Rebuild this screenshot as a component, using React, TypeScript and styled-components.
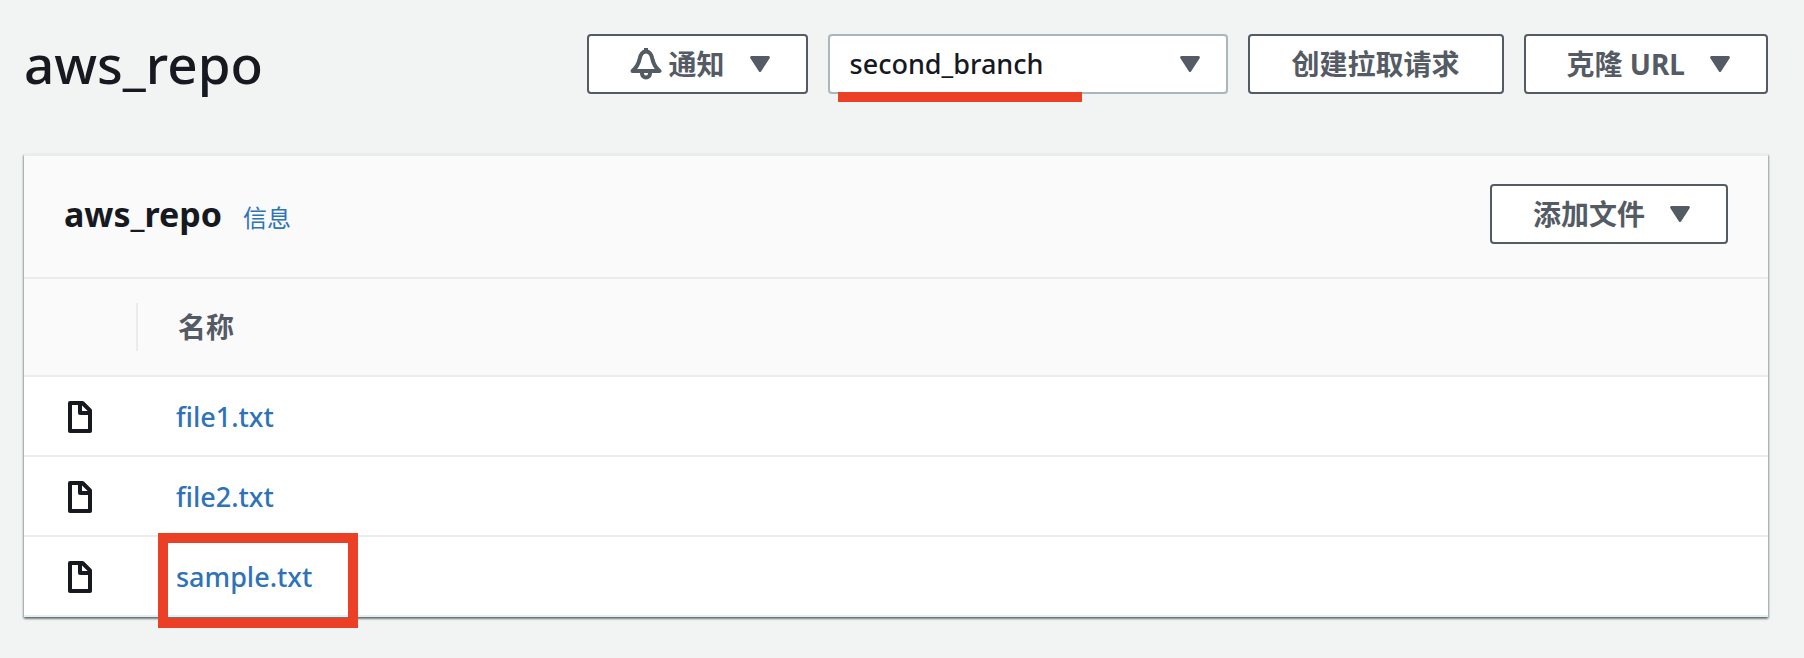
import React from "react";
import styled, { createGlobalStyle } from "styled-components";

const color = {
  page: "#f2f3f3",
  panel: "#fafafa",
  line: "#eaeded",
  text: "#16191f",
  muted: "#545b64",
  input: "#aab7b8",
  link: "#2e73b8",
  mark: "#eb4026",
};

const GlobalStyle = createGlobalStyle`
  * { box-sizing: border-box; }
  body {
    margin: 0;
    background: ${color.page};
    color: ${color.text};
    font-family: "Noto Sans", "Noto Sans CJK SC", sans-serif;
    font-size: 27px;
    font-weight: 500;
    line-height: 40px;
  }
`;

const Page = styled.main`
  padding: 34px 36px 40px 24px;
`;

const PageHeader = styled.header`
  display: flex;
  align-items: center;
  justify-content: space-between;
  gap: 20px;
  margin-bottom: 60px;
`;

const PageTitle = styled.h1`
  margin: 0;
  font-size: 53px;
  line-height: 60px;
  font-weight: 500;
`;

const Actions = styled.div`
  display: flex;
  gap: 20px;
`;

const Button = styled.button<{ $menu?: boolean }>`
  display: flex;
  align-items: center;
  height: 60px;
  padding: 0 ${(p) => (p.$menu ? "36px 0 41px" : "42px")};
  border: 2px solid ${color.muted};
  border-radius: 4px;
  background: #fff;
  color: ${color.muted};
  font: inherit;
  font-size: 28px;
  font-weight: 700;
  white-space: nowrap;
  cursor: pointer;
`;

const CaretSvg = styled.svg`
  display: block;
  flex: none;
  width: 20px;
  height: 16px;
  fill: ${color.muted};
`;

const MenuCaret = styled(CaretSvg)`
  margin-left: 25px;
`;

const BellSvg = styled.svg`
  flex: none;
  width: 32px;
  height: 32px;
  margin-right: 7px;
  fill: none;
  stroke: ${color.muted};
  stroke-width: 4;
  stroke-linejoin: round;
`;

const BranchField = styled.div`
  position: relative;
  width: 400px;
`;

const BranchSelect = styled.select`
  display: block;
  width: 100%;
  height: 60px;
  padding: 0 60px 0 20px;
  border: 2px solid ${color.input};
  border-radius: 4px;
  appearance: none;
  background: #fff;
  color: ${color.text};
  font: inherit;
`;

const FieldCaret = styled(CaretSvg)`
  position: absolute;
  top: 22px;
  right: 28px;
  pointer-events: none;
`;

const Underline = styled.span`
  position: absolute;
  left: 10px;
  bottom: -8px;
  width: 244px;
  height: 10px;
  background: ${color.mark};
`;

const Card = styled.section`
  border-top: 2px solid ${color.line};
  background: #fff;
  box-shadow: 0 2px 2px rgba(0, 28, 36, 0.4), 1px 1px 2px rgba(0, 28, 36, 0.25),
    -1px 1px 2px rgba(0, 28, 36, 0.25);
`;

const CardHeader = styled.div`
  display: flex;
  align-items: center;
  justify-content: space-between;
  padding: 28px 40px 33px;
  background: ${color.panel};
`;

const Heading = styled.div`
  display: flex;
  align-items: baseline;
  gap: 21px;
  padding-top: 4px;
`;

const CardTitle = styled.h2`
  margin: 0;
  font-size: 34px;
  font-weight: 700;
`;

const Link = styled.a<{ $small?: boolean }>`
  color: ${color.link};
  font-size: ${(p) => (p.$small ? 24 : 27)}px;
  font-weight: ${(p) => (p.$small ? 400 : 500)};
  text-decoration: none;
`;

const FileTable = styled.table`
  width: 100%;
  border-collapse: separate;
  border-spacing: 0;
  text-align: left;
`;

const HeadCell = styled.th`
  height: 100px;
  padding: 0;
  border: 2px solid ${color.line};
  border-width: 2px 0;
  background: ${color.panel};
  color: ${color.muted};
  font-size: 28px;
  font-weight: 700;
`;

const HeadLabel = styled.div<{ $divided?: boolean }>`
  height: 48px;
  padding-left: 40px;
  line-height: 48px;
  ${(p) => p.$divided && `border-right: 2px solid ${color.line};`}
`;

const IconCell = styled.td`
  width: 114px;
  height: 80px;
  padding: 2px 0 0 44px;
  border-bottom: 2px solid ${color.line};
`;

const NameCell = styled.td`
  height: 80px;
  padding: 2px 0 0 38px;
  border-bottom: 2px solid ${color.line};
`;

const FileSvg = styled.svg`
  display: block;
  width: 24px;
  height: 32px;
  fill: none;
  stroke: ${color.text};
  stroke-width: 4;
  stroke-linejoin: round;
`;

const Framed = styled.span`
  position: relative;
`;

const Frame = styled.span`
  position: absolute;
  top: -25px;
  left: -18px;
  width: 200px;
  height: 95px;
  border: 10px solid ${color.mark};
  pointer-events: none;
`;

const caretPath = (
  <path d="M1.6 0h16.8a1.4 1.4 0 0 1 1.2 2.2l-8.4 13.1a1.5 1.5 0 0 1-2.4 0L.4 2.2A1.4 1.4 0 0 1 1.6 0z" />
);

const Caret = () => (
  <MenuCaret viewBox="0 0 20 16" aria-hidden="true">
    {caretPath}
  </MenuCaret>
);

const Bell = () => (
  <BellSvg viewBox="0 0 32 32" aria-hidden="true">
    <path d="M16 0v4" />
    <path d="M2.500 23C7 19 8.500 16 9.500 11.500C10.500 6 12.500 3.500 16 3.500s5.500 2.500 6.500 8c1 4.500 2.500 7.500 7 11.500z" />
    <path d="M12 24v1.500a4 4 0 0 0 8 0V24" />
  </BellSvg>
);

const FileIcon = () => (
  <FileSvg viewBox="0 0 24 32" aria-hidden="true">
    <path d="M2 2H14.500L22 9.500V30H2z" />
    <path d="M12 2V12H22" />
  </FileSvg>
);

const files = [
  { name: "file1.txt" },
  { name: "file2.txt" },
  { name: "sample.txt", framed: true },
];

export default function App() {
  return (
    <>
      <GlobalStyle />
      <Page>
        <PageHeader>
          <PageTitle>aws_repo</PageTitle>
          <Actions>
            <Button $menu type="button">
              <Bell />
              通知
              <Caret />
            </Button>
            <BranchField>
              <BranchSelect aria-label="分支" defaultValue="second_branch">
                <option>second_branch</option>
              </BranchSelect>
              <FieldCaret viewBox="0 0 20 16" aria-hidden="true">
                {caretPath}
              </FieldCaret>
              <Underline />
            </BranchField>
            <Button type="button">创建拉取请求</Button>
            <Button $menu type="button">
              克隆 URL
              <Caret />
            </Button>
          </Actions>
        </PageHeader>
        <Card>
          <CardHeader>
            <Heading>
              <CardTitle>aws_repo</CardTitle>
              <Link $small href="#info">
                信息
              </Link>
            </Heading>
            <Button $menu type="button">
              添加文件
              <Caret />
            </Button>
          </CardHeader>
          <FileTable>
            <thead>
              <tr>
                <HeadCell aria-label="类型">
                  <HeadLabel $divided />
                </HeadCell>
                <HeadCell scope="col">
                  <HeadLabel>名称</HeadLabel>
                </HeadCell>
              </tr>
            </thead>
            <tbody>
              {files.map((file) => (
                <tr key={file.name}>
                  <IconCell>
                    <FileIcon />
                  </IconCell>
                  <NameCell>
                    <Framed>
                      <Link href={`#${file.name}`}>{file.name}</Link>
                      {file.framed && <Frame />}
                    </Framed>
                  </NameCell>
                </tr>
              ))}
            </tbody>
          </FileTable>
        </Card>
      </Page>
    </>
  );
}
